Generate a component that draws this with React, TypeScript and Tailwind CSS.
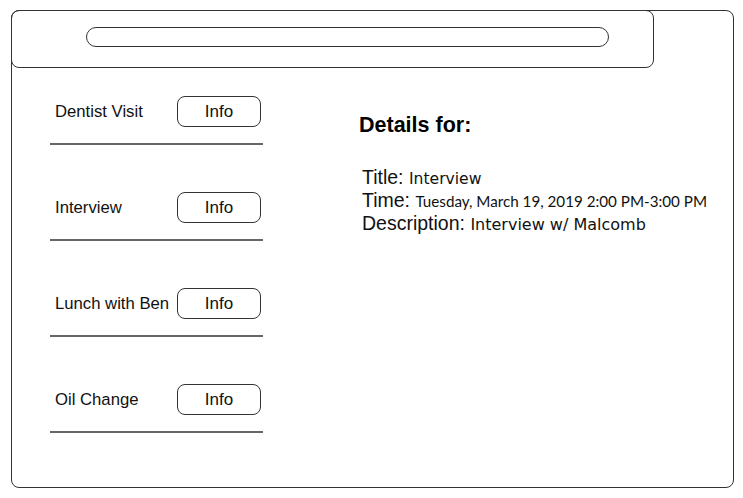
import React from "react";

const items = ["Dentist Visit", "Interview", "Lunch with Ben", "Oil Change"];

export default function App() {
  return (
    <div className="w-[743px] h-[498px] bg-white pt-[10px] pl-[11px]" style={{ fontFamily: '"Liberation Sans", Arial, sans-serif' }}>
      <div className="w-[723px] h-[478px] border border-[#333] rounded-[8px] flex flex-col">
        <div className="-mt-px -ml-px w-[643px] h-[58px] border border-[#333] rounded-[8px] pt-[16px] pl-[74px] shrink-0">
          <div className="w-[523px] h-[20px] rounded-full border border-[#333]" />
        </div>
        <div className="flex">
          <div className="ml-[38px] w-[213px] pt-[28px] flex flex-col">
            {items.map((t) => (
              <div key={t} className="mb-[47px] flex flex-col">
                <div className="h-[31px] flex items-center">
                  <span className="pl-[5px] w-[127px] text-[16.7px] text-[#111] whitespace-nowrap">{t}</span>
                  <div className="w-[84px] h-[31px] border border-[#333] rounded-[8px] flex items-center justify-center text-[17px] text-[#111]">
                    Info
                  </div>
                </div>
                <div className="mt-[16px] h-[2px] bg-[#666]" />
              </div>
            ))}
          </div>
          <div className="ml-[96px] pt-[45px] flex flex-col">
            <div className="text-[21.5px] leading-[24px] font-bold text-black">Details for:</div>
            <div className="mt-[29px] ml-[3px] flex flex-col text-[19.5px] text-[#111] whitespace-nowrap">
              <div className="h-[23px] leading-[23px]">
                Title: <span className="text-[15.6px] leading-[16px]" style={{ fontFamily: '"DejaVu Sans", sans-serif' }}>Interview</span>
              </div>
              <div className="h-[23px] leading-[23px]">
                Time: <span className="text-[15.2px] leading-[16px]" style={{ fontFamily: 'Lato, "Open Sans", sans-serif' }}>Tuesday, March 19, 2019 2:00 PM-3:00 PM</span>
              </div>
              <div className="h-[23px] leading-[23px]">
                Description: <span className="text-[16px] leading-[16px]" style={{ fontFamily: '"DejaVu Sans", sans-serif' }}>Interview w/ Malcomb</span>
              </div>
            </div>
          </div>
        </div>
      </div>
    </div>
  );
}
